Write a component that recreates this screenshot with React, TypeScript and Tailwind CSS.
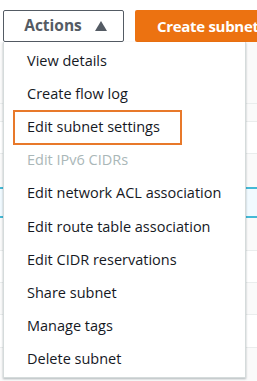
import clsx from "clsx";

const items = [
  { label: "View details" },
  { label: "Create flow log" },
  { label: "Edit subnet settings", highlight: true },
  { label: "Edit IPv6 CIDRs", disabled: true },
  { label: "Edit network ACL association" },
  { label: "Edit route table association" },
  { label: "Edit CIDR reservations" },
  { label: "Share subnet" },
  { label: "Manage tags" },
  { label: "Delete subnet" },
];

const rows = [
  { h: "h-[61px]", cls: "bg-[#fafafa]" },
  { h: "h-[18px]", cls: "bg-[#fafafa] border-t border-[#eaeded]" },
  { h: "h-[32px]", cls: "bg-white border-t border-[#eaeded]" },
  { h: "h-[34px]", cls: "bg-[#fafafa] border-t border-[#eaeded]" },
  { h: "h-[31px]", cls: "bg-[#f1faff] border-y-2 border-[#44b9d6]" },
  { h: "h-[32px]", cls: "bg-[#fafafa]" },
  { h: "h-[32px]", cls: "bg-white border-t border-[#eaeded]" },
  { h: "h-[32px]", cls: "bg-[#fafafa] border-t border-[#eaeded]" },
  { h: "h-[33px]", cls: "bg-white border-t border-[#eaeded]" },
  { h: "h-[34px]", cls: "bg-[#fafafa] border-t border-[#eaeded]" },
];

export default function App() {
  return (
    <div
      className="relative h-[381px] w-[257px] overflow-hidden bg-white"
      style={{ fontFamily: '"Open Sans", "Liberation Sans", sans-serif' }}
    >
      <div className="flex h-[42px] items-end gap-[11px] pl-[3px]">
        <button
          type="button"
          className="flex h-[32px] w-[121px] shrink-0 items-center justify-center gap-[13px] rounded-[2px] border border-[#545b64] bg-white pl-[4px] text-[15.5px] font-bold text-[#545b64]"
        >
          Actions
          <svg width="12" height="10" viewBox="0 0 12 10" aria-hidden>
            <path d="M6 0 L12 10 L0 10 Z" fill="#545b64" />
          </svg>
        </button>
        <button
          type="button"
          className="flex h-[32px] w-[150px] shrink-0 items-center whitespace-nowrap rounded-[2px] bg-[#ec7211] pl-[22px] text-[15px] font-bold tracking-[-0.3px] text-white"
        >
          Create subnet
        </button>
      </div>

      <div className="flex flex-col">
        {rows.map((r, i) => (
          <div key={i} className={clsx("box-border", r.h, r.cls)} />
        ))}
      </div>

      <ul className="absolute left-[3px] top-[42px] w-[243px] border border-t-0 border-[#d5dbdb] bg-white pb-[1px] pt-[2px] shadow-[0_1px_2px_rgba(0,28,36,0.3)]">
        {items.map((item) => (
          <li
            key={item.label}
            className={clsx(
              "relative flex h-[33.2px] items-center whitespace-nowrap pl-[23px] text-[14.5px]",
              item.disabled ? "text-[#aab7b8]" : "text-[#16191f]"
            )}
          >
            {item.label}
            {item.highlight && (
              <span className="pointer-events-none absolute left-[9px] top-[0px] h-[35px] w-[169px] border-2 border-[#e8792a]" />
            )}
          </li>
        ))}
      </ul>
    </div>
  );
}
